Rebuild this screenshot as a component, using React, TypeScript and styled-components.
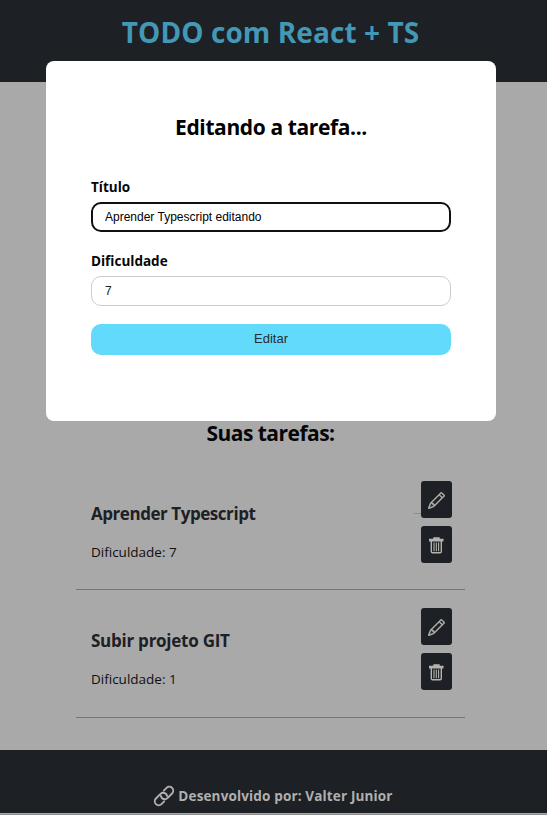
import React from "react";
import styled, { createGlobalStyle } from "styled-components";
import { BsPencil } from "react-icons/bs";

const GlobalStyle = createGlobalStyle`
  * { box-sizing: border-box; }
  body {
    margin: 0;
    background: #a9a9a9;
    font-family: "Segoe UI", "Open Sans", "Noto Sans", sans-serif;
    overflow: hidden;
  }
  h1, h2, h3, h4, p { margin: 0; white-space: nowrap; }
`;

const Page = styled.div`
  height: 815px;
  display: flex;
  flex-direction: column;
  border-bottom: 1px solid #8c8c8c;
`;

const Header = styled.header`
  height: 82px;
  padding: 11px 6px 0 0;
  background: #1d2025;
  text-align: center;
`;

const Title = styled.h1`
  color: #4298b5;
  font-size: 28px;
  line-height: 42px;
  font-weight: 700;
  letter-spacing: 0.08px;
`;

const Main = styled.main`
  height: 668px;
  padding: 336px 82px 0 76px;
`;

const ListTitle = styled.h2`
  color: #060606;
  font-size: 21px;
  line-height: 30px;
  font-weight: 700;
  letter-spacing: -0.52px;
  text-align: center;
  margin-bottom: 14px;
`;

const Task = styled.article<{ $top: number }>`
  height: 128px;
  display: flex;
  justify-content: space-between;
  padding: ${(p) => p.$top}px 13px 0 15px;
  border-bottom: 1px solid #607d86;
`;

const Details = styled.div`
  padding-top: 20px;
`;

const TaskName = styled.h3<{ $spacing: number }>`
  color: #1d2025;
  font-size: 17px;
  line-height: 26px;
  font-weight: 700;
  letter-spacing: ${(p) => p.$spacing}px;
`;

const Difficulty = styled.p`
  color: #101010;
  margin-top: 14px;
  font-size: 13.5px;
  line-height: 22px;
`;

const Actions = styled.div<{ $dash: boolean }>`
  position: relative;
  display: flex;
  flex-direction: column;
  gap: 8px;

  &::before {
    content: "";
    display: ${(p) => (p.$dash ? "block" : "none")};
    position: absolute;
    top: 32px;
    right: 100%;
    width: 7px;
    border-top: 1px solid #8c8c8c;
  }
`;

const IconButton = styled.button`
  width: 31px;
  height: 37px;
  padding: 2px 1px 0 0;
  border: 0;
  border-radius: 3px;
  background: #1d2025;
  color: #b5b3ad;
  display: flex;
  align-items: center;
  justify-content: center;
`;

const Footer = styled.footer`
  height: 63px;
  padding: 29px 1px 0 0;
  background: #1d2025;
  color: #b0b0b0;
  display: flex;
  justify-content: center;
  align-items: center;
  gap: 3px;
`;

const Credit = styled.p`
  font-size: 13.5px;
  font-weight: 700;
  line-height: 20px;
  letter-spacing: 0.15px;
`;

const Dialog = styled.section`
  position: fixed;
  top: 61px;
  left: 46px;
  width: 450px;
  height: 360px;
  padding: 50px 45px;
  border-radius: 8px;
  background: #fff;
`;

const DialogTitle = styled.h2`
  color: #000;
  font-size: 21px;
  line-height: 32px;
  font-weight: 700;
  letter-spacing: -0.38px;
  text-align: center;
  margin-bottom: 33px;
`;

const Field = styled.div`
  margin-bottom: 18px;
`;

const Label = styled.label`
  display: block;
  height: 26px;
  color: #050505;
  font-size: 13.5px;
  line-height: 22px;
  font-weight: 700;
`;

const Input = styled.input<{ $active?: boolean }>`
  display: block;
  width: 100%;
  height: 30px;
  padding: 0 ${(p) => (p.$active ? 12 : 13)}px;
  border: ${(p) => (p.$active ? "2px solid #101010" : "1px solid #ccc")};
  border-radius: 10px;
  outline: 0;
  background: #fff;
  color: ${(p) => (p.$active ? "#000" : "#222")};
  font-family: "Liberation Sans", Arial, sans-serif;
  font-size: 12px;
`;

const Submit = styled.button`
  width: 100%;
  height: 31px;
  padding: 0 0 2px;
  border: 0;
  border-radius: 10px;
  background: #61dafb;
  color: #282c34;
  font-family: "Liberation Sans", Arial, sans-serif;
  font-size: 13px;
`;

function TrashIcon() {
  return (
    <svg width="15" height="17" viewBox="0 0 15 17" fill="none" stroke="currentColor">
      <path d="M5 2V1h5v1M.7 2.5h13.1v1.2H.7zM2.3 4v10.5q0 1.2 1.2 1.2h7.6q1.2 0 1.2-1.2V4" strokeWidth="1.4" />
      <path d="M5 5.5v8.7M7.3 5.5v8.7M9.6 5.5v8.7" strokeWidth="1.1" />
    </svg>
  );
}

function ChainIcon() {
  const link = "M3.6-3.9H7.5a3.9 3.9 0 0 1 0 7.8H1a3.9 3.9 0 0 1-3.2-6.1";
  return (
    <svg width="22" height="22" viewBox="-11 -11 22 22" fill="none" stroke="currentColor" strokeWidth="1.9" strokeLinecap="round">
      <path d={link} transform="rotate(-45)" />
      <path d={link} transform="rotate(135)" />
    </svg>
  );
}

interface TaskProps {
  name: string;
  level: number;
  top: number;
  spacing: number;
  dash?: boolean;
}

function TaskCard({ name, level, top, spacing, dash = false }: TaskProps) {
  return (
    <Task $top={top}>
      <Details>
        <TaskName $spacing={spacing}>{name}</TaskName>
        <Difficulty>Dificuldade: {level}</Difficulty>
      </Details>
      <Actions $dash={dash}>
        <IconButton aria-label="Editar tarefa">
          <BsPencil size={17} stroke="currentColor" strokeWidth={0.4} />
        </IconButton>
        <IconButton aria-label="Excluir tarefa"><TrashIcon /></IconButton>
      </Actions>
    </Task>
  );
}

export default function App() {
  return (
    <>
      <GlobalStyle />
      <Page>
        <Header><Title>TODO com React + TS</Title></Header>
        <Main>
          <ListTitle>Suas tarefas:</ListTitle>
          <TaskCard name="Aprender Typescript" level={7} top={19} spacing={-0.45} dash />
          <TaskCard name="Subir projeto GIT" level={1} top={18} spacing={-0.25} />
        </Main>
        <Footer>
          <ChainIcon />
          <Credit>Desenvolvido por: Valter Junior</Credit>
        </Footer>
      </Page>
      <Dialog>
        <DialogTitle>Editando a tarefa...</DialogTitle>
        <Field>
          <Label htmlFor="title">Título</Label>
          <Input id="title" $active defaultValue="Aprender Typescript editando" />
        </Field>
        <Field>
          <Label htmlFor="level">Dificuldade</Label>
          <Input id="level" defaultValue="7" />
        </Field>
        <Submit>Editar</Submit>
      </Dialog>
    </>
  );
}
